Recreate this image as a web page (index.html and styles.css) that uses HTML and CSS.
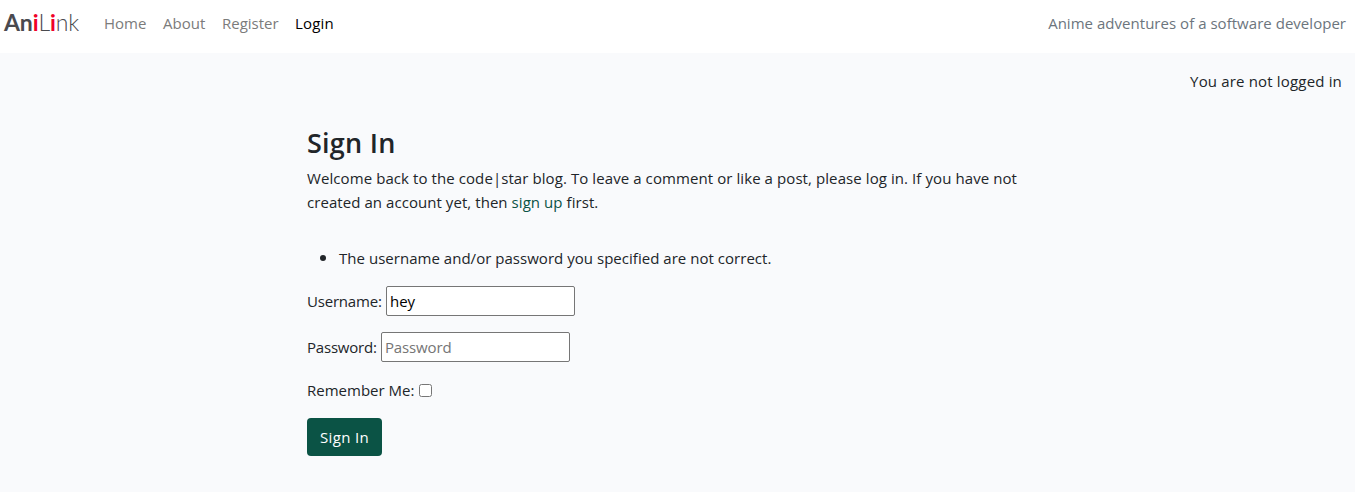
FILE: index.html
```html
<!DOCTYPE html>
<html lang="en">
<head>
<meta charset="utf-8">
<title>AniLink - Sign In</title>
<link rel="stylesheet" href="styles.css">
</head>
<body>
<nav class="navbar">
  <a class="brand"><b>An<i>i</i></b><span>L</span><b><i>i</i></b><span>nk</span></a>
  <div class="links">
    <a class="home">Home</a><a class="about">About</a><a class="register">Register</a><a class="login">Login</a>
  </div>
  <span class="tagline">Anime adventures of a software developer</span>
</nav>
<p class="status"><span>You are not logged in</span></p>
<main class="content">
  <h3><span>Sign In</span></h3>
  <p class="intro"><span class="line-one">Welcome back to the code|star blog. To leave a comment or like a post, please log in. If you have not</span><br><span class="line-two">created an account yet, then <a>sign up</a> first.</span></p>
  <form>
    <ul><li><span>The username and/or password you specified are not correct.</span></li></ul>
    <div class="field"><label class="user" for="user">Username:</label><input id="user" type="text" value="hey"></div>
    <div class="field"><label class="pass" for="pass">Password:</label><input id="pass" type="password" placeholder="Password"></div>
    <div class="remember"><label class="rem" for="remember">Remember Me:</label><input id="remember" type="checkbox"></div>
    <button type="button"><span>Sign In</span></button>
  </form>
</main>
</body>
</html>
```
FILE: styles.css
```css
* { box-sizing: border-box; }
body {
  margin: 0;
  min-height: 492px;
  background: #f9fafc;
  color: #212529;
  font: 15px/24px "Open Sans", "Noto Sans", sans-serif;
  white-space: nowrap;
}
.navbar {
  display: flex;
  align-items: center;
  height: 53px;
  padding: 0 9px 8px 4px;
  background: #fff;
}
.brand {
  width: 76px;
  padding-bottom: 2px;
  color: #4a4a4f;
  font: 300 23px/30px Lato, sans-serif;
  letter-spacing: -0.1px;
}
.brand b { color: #4a4a4f; font-weight: 700; }
.brand i { color: #f00028; font-style: normal; }
.links { display: flex; gap: 16px; margin-left: 24px; color: #7b7b7b; }
.home { width: 43px; }
.about { width: 43px; }
.register { width: 57px; }
.login { width: 40px; color: #000; letter-spacing: 0.2px; }
.tagline { margin-left: auto; color: #6c757d; letter-spacing: 0.03px; }
.status { margin: 16px 13px 0 0; text-align: right; letter-spacing: 0.17px; }
.content { width: 741px; margin: 33px 0 0 307px; }
h3 { margin: 0 0 6px; font-size: 27px; font-weight: 600; line-height: 34px; letter-spacing: 0.25px; }
.intro { margin: 0; }
.line-one { letter-spacing: 0.083px; }
.line-two { letter-spacing: 0.06px; }
.intro a { color: #0b5345; }
form { padding-top: 31px; }
ul { margin: 0 0 16px; padding-left: 32px; letter-spacing: 0.03px; }
li::marker { font-size: 18px; }
.field { display: flex; align-items: center; height: 30px; margin-bottom: 16px; }
.user { width: 79px; letter-spacing: -0.2px; }
.pass { width: 74px; letter-spacing: -0.2px; }
.field input {
  width: 189px;
  height: 30px;
  padding: 1px 3px;
  border: 1px solid #767676;
  border-radius: 2px;
  background: #fff;
  color: #000;
  outline: 0;
  font: inherit;
}
.field input::placeholder { color: #757575; letter-spacing: -0.15px; }
.remember { display: flex; align-items: center; height: 24px; margin-bottom: 16px; }
.rem { width: 112px; }
.remember input { width: 13px; height: 13px; margin: 0; }
button {
  display: block;
  width: 75px;
  height: 38px;
  padding: 0;
  border: 0;
  border-radius: 4px;
  background: #0b5345;
  color: #fff;
  font: inherit;
  letter-spacing: 0.35px;
}
```
